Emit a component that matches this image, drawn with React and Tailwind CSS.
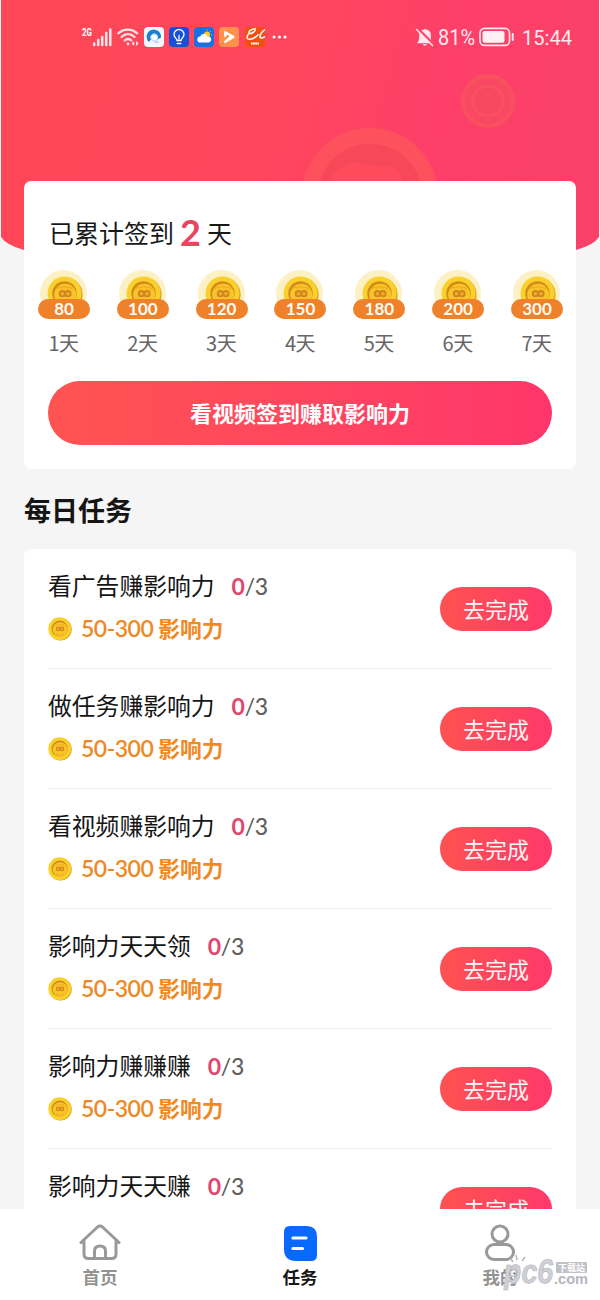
const days = [80, 100, 120, 150, 180, 200, 300];

const tasks = [
  "看广告赚影响力",
  "做任务赚影响力",
  "看视频赚影响力",
  "影响力天天领",
  "影响力赚赚赚",
  "影响力天天赚",
];

function Coin({ className }) {
  return (
    <svg viewBox="0 0 36 36" className={className}>
      <circle cx="18.6" cy="18.4" r="17" fill="#dba016" />
      <circle cx="17.5" cy="17.5" r="17" fill="#fad02c" />
      <circle cx="17.5" cy="17.5" r="12.2" fill="#d18b1b" />
      <circle cx="18.2" cy="18.7" r="11" fill="#f9c42a" />
      <path d="M9.5 13q2-3 5-1 3-3 6 0 4-2 5 2" stroke="#efae22" strokeWidth="1.4" fill="none" />
      <circle cx="15.4" cy="17.7" r="2.7" fill="#f3ad22" stroke="#cf8520" strokeWidth="1.8" />
      <circle cx="21" cy="17.7" r="2.7" fill="#f3ad22" stroke="#cf8520" strokeWidth="1.8" />
      <path d="M12 26q6 3 12 0" stroke="#eba51c" strokeWidth="1.3" fill="none" />
    </svg>
  );
}

function StatusBar() {
  return (
    <div className="relative flex h-[74px] justify-between pr-[28px] pl-[82px] text-white">
      <div className="flex h-[74px] items-center gap-[5px]">
        <svg width="30" height="20" viewBox="0 0 30 20" className="mt-px shrink-0 overflow-visible">
          <text x="0" y="8" fontSize="10" fontWeight="700" fill="#fff" textLength="10" lengthAdjust="spacingAndGlyphs" fontFamily="Roboto, sans-serif">
            2G
          </text>
          <path d="M12.2 15.5v1.5M16.2 12v5M20.2 9v8M24.2 5v12M28.3 1.5v15.5" stroke="#ffe4e8" strokeWidth="2.5" strokeLinecap="round" />
        </svg>
        <svg width="22" height="20" viewBox="0 0 22 20" className="shrink-0" fill="none" stroke="#ffe4e8" strokeWidth="2.3" strokeLinecap="round">
          <path d="M1.5 6.3c5-5 13.5-5 18.5 0M4.5 10c4-3.8 9-3.8 13 0M7.8 13.4c2-1.8 4.5-1.8 6.4 0" />
          <circle cx="11" cy="17" r="1.4" fill="#ffe4e8" stroke="none" />
          <path d="M17.2 14v5l-2.6-2.5zM19 14v5l2.6-2.5z" fill="#ffe4e8" stroke="none" />
        </svg>
        <svg width="20" height="20" viewBox="0 0 20 20" className="shrink-0">
          <rect width="20" height="20" rx="4" fill="#f5f9ff" />
          <path d="M4.9 15A7.2 7.2 0 1 1 17 10.5L12.6 13a3.6 3.6 0 1 0-5.4-.7z" fill="#1f7fce" />
          <path d="M7.2 12.3a3.6 3.6 0 1 1 5.4.7l3 3a7 7 0 0 1-8.4-3.7z" fill="#b7dcf5" />
          <circle cx="10.2" cy="10.6" r="2.8" fill="#fff" />
        </svg>
        <svg width="20" height="20" viewBox="0 0 20 20" className="shrink-0" fill="none" stroke="#fff" strokeWidth="1.3" strokeLinecap="round">
          <rect width="20" height="20" rx="4" fill="#1550d8" stroke="none" />
          <path d="M8 13.5c0-2-3-3-3-6a5 5 0 0 1 10 0c0 3-3 4-3 6zM8.2 16.5h3.6M10 12V8.5" />
        </svg>
        <svg width="20" height="20" viewBox="0 0 20 20" className="shrink-0">
          <rect width="20" height="20" rx="4" fill="#1471e8" />
          <circle cx="13" cy="7.5" r="3" fill="#ffc928" />
          <path d="M13 2.5v1M17 4l-.8.8M18 8h-1" stroke="#ffc928" />
          <path d="M6.5 15.5a3 3 0 0 1-.4-6 4 4 0 0 1 7.4 0h.5a3 3 0 0 1 .3 6z" fill="#fff" />
        </svg>
        <svg width="20" height="20" viewBox="0 0 20 20" className="shrink-0">
          <rect width="20" height="20" rx="4" fill="#ff914d" />
          <path d="M6.2 9V5.2L14.5 10l-8.3 4.8 5.2-4.6" fill="none" stroke="#fff" strokeWidth="2.3" strokeLinejoin="round" strokeLinecap="round" />
        </svg>
        <svg width="20" height="20" viewBox="0 0 20 20" className="ml-px shrink-0">
          <rect width="20" height="20" rx="3" fill="#f2500f" />
          <path
            d="M11 1.8C6 2 3 4.5 4.2 6S10 4.8 10.2 3M4.2 6.3C.8 9.8 1.5 12.8 5.5 12.3c4-.6 6-2.6 8-5"
            fill="none"
            stroke="#fff"
            strokeWidth="1.5"
          />
          <path d="M20 2.5c-3 2-5.5 5.5-5 7.6.5 1.5 3 .8 5-.6" fill="none" stroke="#fff" strokeWidth="1.5" />
          <path d="M6 16.6h8" stroke="#fff" strokeWidth="2" strokeDasharray="1.8 .3" />
        </svg>
        <svg width="16" height="4" viewBox="0 0 16 4" className="ml-[2px] shrink-0" fill="#fff">
          <circle cx="2" cy="2" r="1.5" />
          <circle cx="7.5" cy="2" r="1.5" />
          <circle cx="13" cy="2" r="1.5" />
        </svg>
      </div>
      <div className="flex h-[74px] items-center text-[#ffe9ee]">
        <svg width="20" height="20" viewBox="0 0 20 20" className="mr-[3px]">
          <path d="M2 16.2q2.2-2.5 2.2-5.2V8A5.3 5.3 0 0 1 9 2.5q1-1.5 2 0A5.3 5.3 0 0 1 15.8 8v3q0 2.7 2.2 5.2zM7.7 17.3h4.6q-2.3 3-4.6 0z" fill="#ffe9ee" />
          <path d="M2.5 1.5l16 16" stroke="#ff4465" strokeWidth="3" />
          <path d="M1.5 2.5l16 16" stroke="#ffe9ee" strokeWidth="1.5" strokeLinecap="round" />
        </svg>
        <svg width="38" height="30" viewBox="0 -4 38 30" className="overflow-visible">
          <text x="0" y="19" fontSize="21.5" fill="#ffe9ee" textLength="37" lengthAdjust="spacingAndGlyphs" fontFamily="Roboto, sans-serif">
            81%
          </text>
        </svg>
        <svg width="36" height="20" viewBox="0 0 36 20" className="ml-[3px]">
          <rect x="1" y="1.4" width="29.5" height="17" rx="4.5" fill="none" stroke="#ffe9ee" strokeWidth="1.6" />
          <rect x="3.5" y="4" width="22" height="11.8" rx="2" fill="#fff0f4" />
          <path d="M33.7 7v6" stroke="#ffe9ee" strokeWidth="2" strokeLinecap="round" />
        </svg>
        <svg width="50" height="30" viewBox="0 -4 50 30" className="ml-[7px] overflow-visible">
          <text x="0" y="19" fontSize="21" fill="#ffe9ee" textLength="50" lengthAdjust="spacingAndGlyphs" fontFamily="Roboto, sans-serif">
            15:44
          </text>
        </svg>
      </div>
    </div>
  );
}

function HeaderBackground() {
  return (
    <svg className="absolute top-0 left-0 h-[256px] w-[600px]" viewBox="0 0 600 256">
      <defs>
        <linearGradient id="header" x1="0" y1="0" x2="1" y2="0.12">
          <stop offset="0" stopColor="#ff4757" />
          <stop offset="0.5" stopColor="#ff465d" />
          <stop offset="0.78" stopColor="#fd3f69" />
          <stop offset="1" stopColor="#fb4167" />
        </linearGradient>
      </defs>
      <path d="M1 0h598v237Q594 245 576 250H24Q6 245 1 237z" fill="url(#header)" />
      <g fill="none">
        <circle cx="488" cy="101" r="25" stroke="#f9505f" strokeWidth="4" fill="#f94962" />
        <circle cx="488" cy="101" r="15" stroke="#fa5162" strokeWidth="3" />
        <circle cx="488" cy="101" r="7" stroke="#f54c62" strokeWidth="3" />
        <circle cx="370" cy="196" r="60" stroke="#fd525d" strokeWidth="16" />
        <circle cx="370" cy="196" r="52" fill="#f64859" />
        <path d="M330 188q0-16 14-22 7-5 18-3 14 5 30 3 12 8 11 22z" fill="#ff4b5c" />
      </g>
    </svg>
  );
}

function CheckInCard() {
  return (
    <section className="relative mx-6 mt-[107px] h-[288px] shrink-0 rounded-[7px] bg-white">
      <div className="flex h-[88px] items-center pt-[14px] pl-[25px] text-[25px] leading-none text-[#181818]">
        <span>已累计签到</span>
        <span className="mx-[6px] font-[Lato] text-[36px] font-bold text-[#e64660]">2</span>
        <span>天</span>
      </div>
      <div className="ml-[14px] flex justify-between pr-[13px]">
        {days.map((points, i) => (
          <div key={points} className="flex w-[52px] flex-col items-center">
            <div className="relative flex h-[50px] w-full items-end justify-center">
              <div className="absolute top-[1px] left-[2px] flex h-[47px] w-[47px] items-start justify-center rounded-full bg-[#fcf0c5] pt-[6px]">
                <Coin className="ml-[3px] size-9 shrink-0" />
              </div>
              <div className="relative flex h-[20px] w-full items-center justify-center rounded-full bg-[#ee8129] pb-px font-[Lato] text-[17px] leading-none font-bold text-[#fffaf2]">
                {points}
              </div>
            </div>
            <div className="mt-[13px] pr-[1px] text-[20px] leading-[22px] tracking-[-0.5px] whitespace-nowrap text-[#666]">{i + 1}天</div>
          </div>
        ))}
      </div>
      <button className="mt-[27px] ml-6 flex h-[64px] w-[504px] items-center justify-center rounded-full bg-linear-to-r from-[#ff5351] to-[#ff356a] pb-[2px] text-[22px] font-bold text-white">
        看视频签到赚取影响力
      </button>
    </section>
  );
}

function TaskRow({ title }) {
  return (
    <div className="flex h-[120px] shrink-0 justify-between border-b border-[#f0f0f0]">
      <div>
        <div className="mt-[22px] flex h-[28px] items-center text-[23.8px] leading-none text-[#151515]">
          {title}
          <span className="mt-[2px] ml-[17px] font-[Lato] text-[23px] tracking-[-0.3px] text-[#606060]">
            <span className="font-bold text-[#e34570]">0</span>/<span className="font-medium">3</span>
          </span>
        </div>
        <div className="mt-[15px] flex h-[28px] items-center text-[21.7px] leading-none font-bold text-[#ed8a25]">
          <Coin className="mt-[2px] mr-[9px] size-6" />
          <span className="mt-px mr-[5px] font-[Lato] text-[23px] font-semibold tracking-[-0.5px]">50-300</span>
          影响力
        </div>
      </div>
      <button className="mt-[38px] h-[44px] w-[112px] rounded-full bg-linear-to-r from-[#ff5150] to-[#ff386a] pb-[2px] text-[22px] text-[#fff5f6]">
        去完成
      </button>
    </div>
  );
}

function TabBar() {
  return (
    <nav className="relative grid h-[91px] shrink-0 grid-cols-3 bg-white text-[17.5px] leading-none font-bold text-[#929292]">
      <div className="flex flex-col items-center pt-[15px]">
        <svg width="42" height="38" viewBox="0 0 42 38" fill="none" stroke="#999" strokeWidth="3" strokeLinecap="round" strokeLinejoin="round">
          <path d="M2 18.5L18.5 3q2.5-2 5 0L40 18.5M5 16v14q0 4.5 4.5 4.5h23q4.5 0 4.5-4.5V16" />
          <path d="M15.5 34V27q0-5 5.5-5t5.5 5v7" />
        </svg>
        <span className="mt-[6px]">首页</span>
      </div>
      <div className="flex flex-col items-center pt-[16px] text-[#161616]">
        <svg width="35" height="37" viewBox="0 0 35 37">
          <path d="M7 1h16q11 0 11 11v18q0 6-6 6H13Q1 36 1 24V7q0-6 6-6z" fill="#0869ff" />
          <path d="M10 13h13M10 23.5h9.5" stroke="#fff" strokeWidth="3.2" strokeLinecap="round" />
        </svg>
        <span className="mt-[6px]">任务</span>
      </div>
      <div className="flex flex-col items-center pt-[15px]">
        <svg width="32" height="38" viewBox="0 0 32 38" fill="none" stroke="#999" strokeWidth="3">
          <circle cx="16" cy="10" r="8" />
          <rect x="2.5" y="20.5" width="27" height="15" rx="7.5" />
        </svg>
        <span className="mt-[6px]">我的</span>
      </div>
      <Watermark />
    </nav>
  );
}

function Watermark() {
  return (
    <svg className="absolute top-[45px] left-[500px] overflow-visible" width="94" height="40" viewBox="0 0 94 40">
      <text
        x="6"
        y="29"
        fontSize="34"
        textLength="50"
        lengthAdjust="spacingAndGlyphs"
        transform="skewX(-7)"
        fontFamily="Liberation Sans, sans-serif"
        fontWeight="700"
        fill="#cfd0d6"
        stroke="#b4b6be"
        strokeWidth="0.6"
      >
        pc6
      </text>
      <path d="M13 8l-3-4M17 6l-1-5M22 7l3-4" stroke="#b5b7bd" strokeWidth="1.5" />
      <circle cx="13.5" cy="19" r="3.5" fill="#f2f2f4" stroke="#9fa1a8" />
      <circle cx="14.5" cy="19.5" r="1.3" fill="#85878f" />
      <rect x="56" y="8" width="31" height="11" rx="1" fill="#bfc1c6" />
      <text x="58" y="17" fontSize="9" fill="#fff" textLength="27" fontFamily="Noto Sans CJK SC, sans-serif">
        下载站
      </text>
      <text x="54" y="30" fontSize="14" fill="#b5b7be" textLength="34" lengthAdjust="spacingAndGlyphs" fontFamily="Liberation Sans, sans-serif" fontWeight="700">
        .com
      </text>
    </svg>
  );
}

export default function App() {
  return (
    <div className="relative flex h-[1300px] w-[600px] flex-col overflow-hidden bg-[#f5f5f5] font-['Noto_Sans_CJK_SC',sans-serif]">
      <HeaderBackground />
      <StatusBar />
      <main className="flex min-h-0 flex-1 flex-col overflow-hidden">
        <CheckInCard />
        <h2 className="mt-[27px] ml-6 text-[27px] leading-[28px] font-bold text-[#151515]">每日任务</h2>
        <section className="mx-6 mt-[25px] flex min-h-0 flex-1 flex-col overflow-hidden rounded-t-[7px] bg-white px-6">
          {tasks.map((title) => (
            <TaskRow key={title} title={title} />
          ))}
        </section>
      </main>
      <TabBar />
    </div>
  );
}
